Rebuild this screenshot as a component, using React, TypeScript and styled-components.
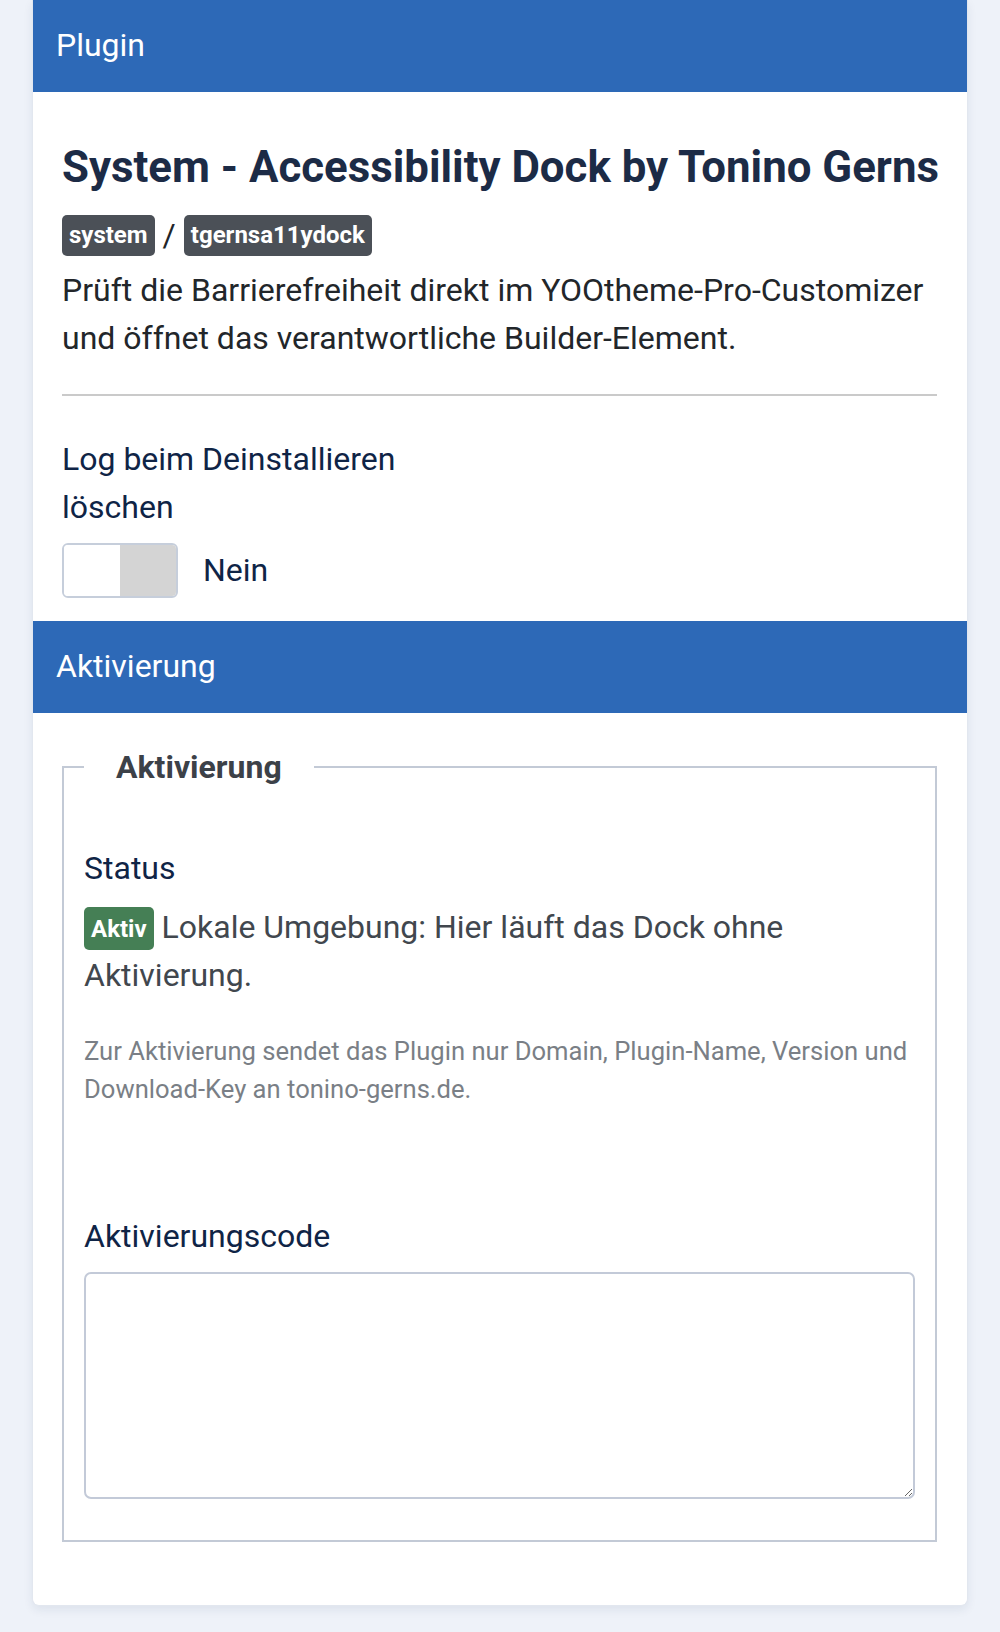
import React from 'react';
import styled, { createGlobalStyle } from 'styled-components';

const GlobalStyle = createGlobalStyle`
  html, body {
    margin: 0;
    padding: 0;
    background: #eef2f9;
  }
  body {
    font-family: Roboto, "Liberation Sans", Arial, sans-serif;
    font-size: 32px;
    line-height: 1.5;
    color: #212529;
  }
  * {
    box-sizing: border-box;
  }
`;

const Page = styled.div`
  padding: 0 32px 27px 32px;
  width: 1000px;
`;

const Card = styled.div`
  background: #fff;
  border: 1px solid #e2e7ef;
  border-top: none;
  border-radius: 0 0 7px 7px;
  box-shadow: 0 4px 10px rgba(30, 50, 90, 0.08);
`;

const CardHeader = styled.div`
  height: 92px;
  padding: 26px 24px 0 23px;
  background: #2d69b7;
  color: #fff;
  font-size: 32px;
  line-height: 1.2;
`;

const Section = styled.div<{ $top: number; $bottom: number }>`
  padding: ${(p) => p.$top}px 30px ${(p) => p.$bottom}px 29px;
`;

const Title = styled.h2`
  margin: 0;
  font-size: 43.8px;
  line-height: 1.2;
  font-weight: 700;
  white-space: nowrap;
  color: #1c2b46;
`;

const BadgeRow = styled.div`
  display: flex;
  align-items: center;
  gap: 8px;
  margin-top: 21px;
  height: 41px;
  color: #1c2b46;
`;

const Badge = styled.span<{ $tone?: 'dark' | 'green' }>`
  display: inline-block;
  padding: 8.5px 7px;
  border-radius: 5px;
  background: ${(p) => (p.$tone === 'green' ? '#457f55' : '#4b5057')};
  color: #fff;
  font-size: 24px;
  font-weight: 700;
  line-height: 1;
`;

const InlineBadge = styled(Badge)`
  padding: 9.5px 7px;
  vertical-align: 1px;
`;

const Slash = styled.span`
  font-size: 32px;
  line-height: 1;
  color: #212529;
`;

const Description = styled.p`
  margin: 10px 0 0;
  color: #22262a;
`;

const Divider = styled.hr`
  margin: 32px 0 0;
  border: none;
  border-top: 2px solid #cacaca;
`;

const FieldLabel = styled.div<{ $gap: number; $width?: number }>`
  margin-top: ${(p) => p.$gap}px;
  max-width: ${(p) => (p.$width ? `${p.$width}px` : 'none')};
  color: #0f2446;
`;

const SwitchRow = styled.div`
  display: flex;
  align-items: center;
  gap: 25px;
  margin-top: 12px;
  color: #0f2446;
`;

const Switch = styled.div`
  display: flex;
  width: 116px;
  height: 55px;
  border: 2px solid #c6cedb;
  border-radius: 6px;
  overflow: hidden;
`;

const SwitchHalf = styled.span<{ $on?: boolean }>`
  flex: 1;
  background: ${(p) => (p.$on ? '#d4d4d4' : '#fff')};
`;

const Fieldset = styled.fieldset`
  margin: 0;
  padding: 0 20px 41px;
  border: 2px solid #c3cad6;
  min-width: 0;
`;

const Legend = styled.legend`
  padding: 0 32px;
  font-size: 32px;
  font-weight: 700;
  line-height: 1.5;
  color: #3c4148;
`;

const StatusText = styled.p`
  margin: 11px 0 0;
  color: #41474e;
`;

const Hint = styled.p`
  margin: 33px 0 0;
  font-size: 25.6px;
  line-height: 1.5;
  color: #7a7f86;
`;

const CodeInput = styled.textarea`
  display: block;
  width: 100%;
  height: 227px;
  margin-top: 12px;
  padding: 12px 16px;
  border: 2px solid #c3cad8;
  border-radius: 7px;
  font-family: inherit;
  font-size: 32px;
  resize: vertical;
  background: #fff;
`;

export default function App() {
  return (
    <>
      <GlobalStyle />
      <Page>
        <Card>
          <CardHeader>Plugin</CardHeader>
          <Section $top={49} $bottom={23}>
            <Title>System - Accessibility Dock by Tonino Gerns</Title>
            <BadgeRow>
              <Badge>system</Badge>
              <Slash>/</Slash>
              <Badge>tgernsa11ydock</Badge>
            </BadgeRow>
            <Description>
              Prüft die Barrierefreiheit direkt im YOOtheme-Pro-Customizer und
              öffnet das verantwortliche Builder-Element.
            </Description>
            <Divider />
            <FieldLabel $gap={39} $width={380}>
              Log beim Deinstallieren löschen
            </FieldLabel>
            <SwitchRow>
              <Switch>
                <SwitchHalf />
                <SwitchHalf $on />
              </Switch>
              <span>Nein</span>
            </SwitchRow>
          </Section>
          <CardHeader>Aktivierung</CardHeader>
          <Section $top={30} $bottom={63}>
            <Fieldset>
              <Legend>Aktivierung</Legend>
              <FieldLabel $gap={53}>Status</FieldLabel>
              <StatusText>
                <InlineBadge $tone="green">Aktiv</InlineBadge> Lokale Umgebung:
                Hier läuft das Dock ohne Aktivierung.
              </StatusText>
              <Hint>
                Zur Aktivierung sendet das Plugin nur Domain, Plugin-Name,
                Version und Download-Key an tonino-gerns.de.
              </Hint>
              <FieldLabel $gap={104}>Aktivierungscode</FieldLabel>
              <CodeInput aria-label="Aktivierungscode" />
            </Fieldset>
          </Section>
        </Card>
      </Page>
    </>
  );
}
